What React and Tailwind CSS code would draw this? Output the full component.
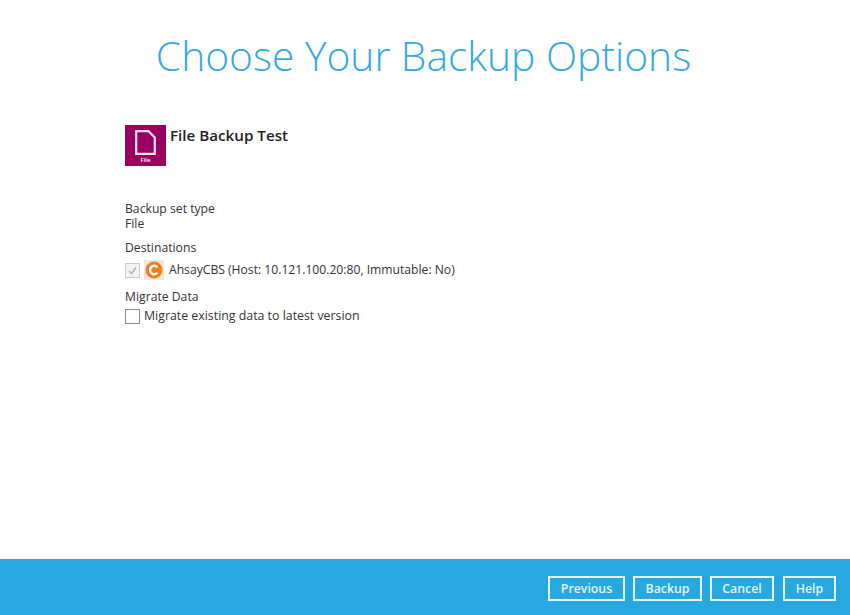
export default function App() {
  return (
    <div className="w-[850px] h-[615px] bg-white flex flex-col overflow-hidden text-[#333] font-['Open_Sans',sans-serif]">
      <div className="flex-1 min-h-0 flex flex-col">
        <h1 className="mt-[28px] h-[54px] pr-[3px] text-center text-[40.75px] leading-[54px] font-light text-[#35a9dc]">Choose Your Backup Options</h1>
        <div className="mt-[43px] ml-[125px] flex flex-col">
          <div className="flex items-start gap-[4px] h-[41px]">
            <div className="w-[41px] h-[41px] bg-[#99005f] flex flex-col items-center">
              <svg width="21" height="25" viewBox="0 0 21 25" className="mt-[5px]" fill="none">
                <path d="M1.2 1.2H13.5L19.8 7.5V23.8H1.2Z" stroke="#f6e6f0" strokeWidth="2.2" fill="none" />
              </svg>
              <span className="mt-[1px] text-[6px] leading-[8px] text-white font-semibold">File</span>
            </div>
            <span className="text-[15.2px] leading-[21px] font-semibold text-[#222]">File Backup Test</span>
          </div>
          <div className="mt-[35px] text-[12.2px] leading-[15px]">Backup set type</div>
          <div className="text-[12.2px] leading-[15px]">File</div>
          <div className="mt-[9px] text-[12.2px] leading-[16px]">Destinations</div>
          <div className="mt-[4px] flex items-center h-[20px]">
            <span className="w-[15px] h-[15px] border border-[#ccc] bg-[#f4f4f4] flex items-center justify-center">
              <svg width="11" height="11" viewBox="0 0 11 11" fill="none"><path d="M2 6l2.5 2.5L9 2.5" stroke="#b5b5b5" strokeWidth="1.6" /></svg>
            </span>
            <span className="ml-[4px] w-[20px] h-[20px] bg-[#efe6de] flex items-center justify-center">
              <svg width="18" height="18" viewBox="0 0 18 18" fill="none">
                <circle cx="9" cy="9" r="8.5" fill="#f07f22" />
                <path d="M12.4 6.2A4.2 4.2 0 1 0 12.4 11.8" stroke="#fff" strokeWidth="2.4" fill="none" />
              </svg>
            </span>
            <span className="ml-[5px] text-[12.15px] leading-[20px]">AhsayCBS (Host: 10.121.100.20:80, Immutable: No)</span>
          </div>
          <div className="mt-[9px] text-[12.2px] leading-[16px]">Migrate Data</div>
          <div className="mt-[2px] flex items-center h-[18px]">
            <span className="w-[15px] h-[15px] border border-[#888] bg-white" />
            <span className="ml-[4px] text-[12.35px] leading-[18px]">Migrate existing data to latest version</span>
          </div>
        </div>
      </div>
      <div className="h-[56px] bg-[#25a9e0] flex items-start justify-end pt-[17px] pr-[14px] text-[12.3px] font-semibold text-[#e4f4fb]">
        <button className="w-[77px] h-[25px] pt-[1px] border-2 border-[#e4f6fd] flex items-center justify-center">Previous</button>
        <button className="ml-[8px] w-[69px] h-[25px] pt-[1px] border-2 border-[#e4f6fd] flex items-center justify-center">Backup</button>
        <button className="ml-[8px] w-[64px] h-[25px] pt-[1px] border-2 border-[#e4f6fd] flex items-center justify-center">Cancel</button>
        <button className="ml-[9px] w-[53px] h-[25px] pt-[1px] border-2 border-[#e4f6fd] flex items-center justify-center">Help</button>
      </div>
    </div>
  );
}
